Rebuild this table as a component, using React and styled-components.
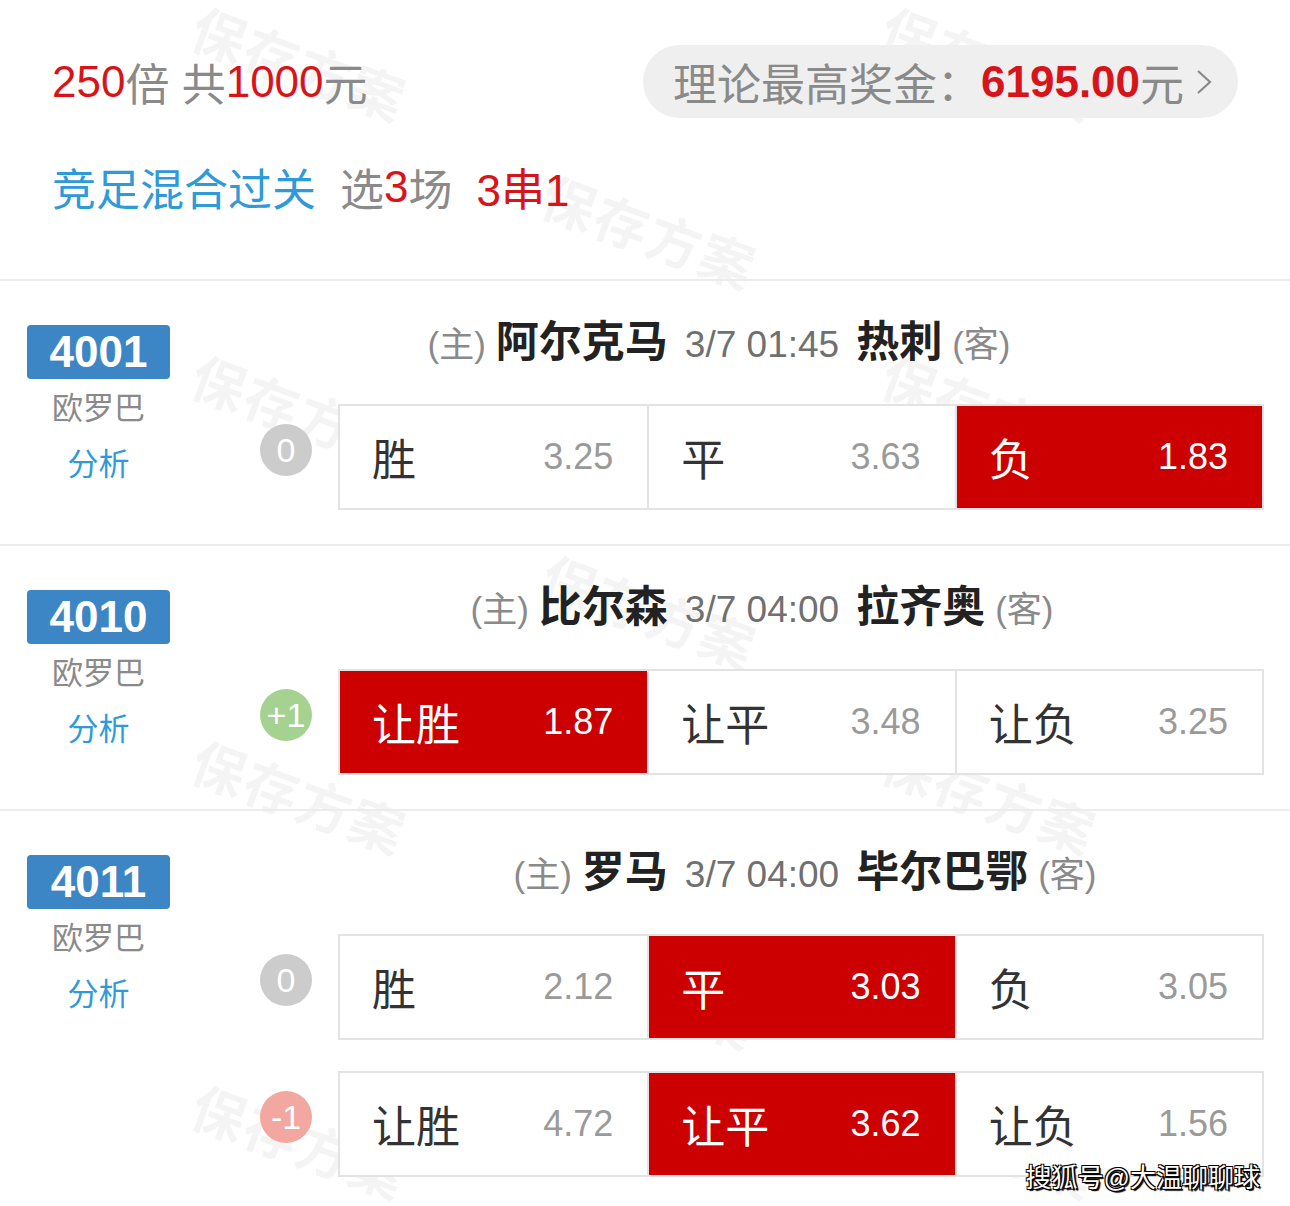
import React from "react";
import styled, { createGlobalStyle } from "styled-components";

const Global = createGlobalStyle`
  html, body { margin: 0; padding: 0; background: #fff; }
  body { font-family: "Liberation Sans", "Noto Sans CJK SC", sans-serif; }
  * { box-sizing: border-box; }
`;

const Page = styled.div`
  position: relative;
  width: 1290px;
  height: 1206px;
  overflow: hidden;
  background: #fff;
`;

const WatermarkLayer = styled.div`
  position: absolute;
  inset: 0;
  pointer-events: none;
  z-index: 0;
`;

const Mark = styled.div`
  position: absolute;
  font-size: 54px;
  font-weight: 700;
  color: rgba(0, 0, 0, 0.045);
  transform: translate(-50%, -50%) rotate(20deg);
  white-space: nowrap;
  letter-spacing: 2px;
`;

const Content = styled.div`
  position: relative;
  z-index: 1;
`;

const Summary = styled.section`
  padding: 45px 52px 67px 52px;
`;

const TopRow = styled.div`
  display: flex;
  align-items: center;
  justify-content: space-between;
  height: 73px;
`;

const Text = styled.span`
  font-size: ${(p) => p.$size || 44}px;
  color: ${(p) =>
    p.$tone === "red" ? "#d8141b" : p.$tone === "blue" ? "#2f9ad9" : "#8a8a8a"};
  font-weight: ${(p) => (p.$bold ? 700 : 400)};
  margin-left: ${(p) => p.$gap || 0}px;
  white-space: pre;
`;

const Line = styled.div`
  display: flex;
  align-items: center;
  height: 50px;
`;

const Pill = styled.div`
  display: flex;
  align-items: center;
  width: 595px;
  height: 73px;
  padding-left: 30px;
  border-radius: 37px;
  background: #efefef;
`;

const Chevron = styled.svg`
  margin-left: 12px;
  width: 16px;
  height: 26px;
`;

const SecondLine = styled(Line)`
  margin-top: 44px;
`;

const Match = styled.section`
  display: flex;
  border-top: 2px solid #ececec;
  padding-bottom: ${(p) => p.$pb || 34}px;
`;

const LeftCol = styled.div`
  width: 143px;
  margin-left: 27px;
  padding-top: 44px;
  display: flex;
  flex-direction: column;
  align-items: center;
`;

const Badge = styled.div`
  width: 143px;
  height: 54px;
  border-radius: 4px;
  background: #3d86c5;
  color: #fff;
  font-size: 44px;
  font-weight: 700;
  display: flex;
  align-items: center;
  justify-content: center;
`;

const League = styled.div`
  margin-top: 10px;
  font-size: 31px;
  line-height: 40px;
  color: #8a8a8a;
`;

const Analysis = styled.div`
  margin-top: 16px;
  font-size: 31px;
  line-height: 40px;
  color: #2f9ad9;
`;

const RightCol = styled.div`
  width: 1004px;
  margin-left: 90px;
  padding-top: 36px;
`;

const Header = styled.div`
  display: grid;
  grid-template-columns: 1fr auto 1fr;
  align-items: baseline;
  height: 50px;
  line-height: 50px;
  column-gap: 17px;
  overflow: visible;
`;

const Side = styled.div`
  display: flex;
  align-items: baseline;
  gap: 10px;
  justify-content: ${(p) => (p.$end ? "flex-end" : "flex-start")};
`;

const Tag = styled.span`
  font-size: 35px;
  color: #8a8a8a;
`;

const Team = styled.span`
  font-size: 43px;
  font-weight: 700;
  color: #222;
`;

const Time = styled.span`
  font-size: 37px;
  color: #707070;
`;

const OddsLine = styled.div`
  display: flex;
  align-items: flex-start;
  margin-top: ${(p) => p.$mt}px;
`;

const Handicap = styled.div`
  width: 52px;
  height: 52px;
  margin-top: 20px;
  margin-right: 26px;
  border-radius: 50%;
  background: ${(p) => p.$bg};
  color: #fff;
  font-size: 34px;
  display: flex;
  align-items: center;
  justify-content: center;
`;

const Grid = styled.div`
  flex: 1;
  display: grid;
  grid-template-columns: repeat(3, 1fr);
  height: 106px;
  border: 2px solid #e3e3e3;
  background: #fff;
`;

const Cell = styled.div`
  display: flex;
  align-items: center;
  justify-content: space-between;
  padding: 0 34px 0 32px;
  border-left: ${(p) => (p.$first ? "none" : "2px solid #e3e3e3")};
  background: ${(p) => (p.$on ? "#cc0000" : "#fff")};
`;

const Label = styled.span`
  font-size: 44px;
  color: ${(p) => (p.$on ? "#fff" : "#333")};
`;

const Odd = styled.span`
  font-size: 36px;
  color: ${(p) => (p.$on ? "#fff" : "#9a9a9a")};
`;

const Credit = styled.div`
  position: absolute;
  right: 30px;
  bottom: 12px;
  z-index: 2;
  font-size: 26px;
  color: #fff;
  text-shadow: 1px 1px 0 #000, -1px -1px 0 #000, 1px -1px 0 #000, -1px 1px 0 #000, 2px 2px 1px #000;
`;

const marks = [
  [300, 62], [990, 62], [650, 230], [300, 410], [990, 410],
  [650, 610], [300, 795], [990, 795], [650, 990], [300, 1140], [990, 1140],
];

const circleColors = { "0": "#cccccc", "+1": "#a5d290", "-1": "#f2a7a1" };

const matches = [
  {
    no: "4001", home: "阿尔克马", time: "3/7 01:45", away: "热刺",
    lines: [{ h: "0", cells: [["胜", "3.25"], ["平", "3.63"], ["负", "1.83"]], on: 2 }],
  },
  {
    no: "4010", home: "比尔森", time: "3/7 04:00", away: "拉齐奥",
    lines: [{ h: "+1", cells: [["让胜", "1.87"], ["让平", "3.48"], ["让负", "3.25"]], on: 0 }],
  },
  {
    no: "4011", home: "罗马", time: "3/7 04:00", away: "毕尔巴鄂",
    lines: [
      { h: "0", cells: [["胜", "2.12"], ["平", "3.03"], ["负", "3.05"]], on: 1 },
      { h: "-1", cells: [["让胜", "4.72"], ["让平", "3.62"], ["让负", "1.56"]], on: 1 },
    ],
  },
];

export default function App() {
  return (
    <Page>
      <Global />
      <WatermarkLayer>
        {marks.map(([x, y], i) => (
          <Mark key={i} style={{ left: x, top: y }}>保存方案</Mark>
        ))}
      </WatermarkLayer>
      <Content>
        <Summary>
          <TopRow>
            <Line>
              <Text $tone="red">250</Text>
              <Text>倍 共</Text>
              <Text $tone="red">1000</Text>
              <Text>元</Text>
            </Line>
            <Pill>
              <Text>理论最高奖金：</Text>
              <Text $tone="red" $bold>6195.00</Text>
              <Text>元</Text>
              <Chevron viewBox="0 0 16 26">
                <polyline points="2,2 14,13 2,24" fill="none" stroke="#8a8a8a" strokeWidth="2.2" />
              </Chevron>
            </Pill>
          </TopRow>
          <SecondLine>
            <Text $tone="blue">竞足混合过关</Text>
            <Text $gap={24}>选</Text>
            <Text $tone="red">3</Text>
            <Text>场</Text>
            <Text $tone="red" $gap={24}>3串1</Text>
          </SecondLine>
        </Summary>
        {matches.map((m, mi) => (
          <Match key={m.no} $pb={mi === 2 ? 27 : 34}>
            <LeftCol>
              <Badge>{m.no}</Badge>
              <League>欧罗巴</League>
              <Analysis>分析</Analysis>
            </LeftCol>
            <RightCol>
              <Header>
                <Side $end>
                  <Tag>(主)</Tag>
                  <Team>{m.home}</Team>
                </Side>
                <Time>{m.time}</Time>
                <Side>
                  <Team>{m.away}</Team>
                  <Tag>(客)</Tag>
                </Side>
              </Header>
              {m.lines.map((ln, li) => (
                <OddsLine key={li} $mt={li === 0 ? 37 : 31}>
                  <Handicap $bg={circleColors[ln.h]}>{ln.h}</Handicap>
                  <Grid>
                    {ln.cells.map(([label, odd], ci) => (
                      <Cell key={ci} $first={ci === 0} $on={ci === ln.on}>
                        <Label $on={ci === ln.on}>{label}</Label>
                        <Odd $on={ci === ln.on}>{odd}</Odd>
                      </Cell>
                    ))}
                  </Grid>
                </OddsLine>
              ))}
            </RightCol>
          </Match>
        ))}
      </Content>
      <Credit>搜狐号@大温聊聊球</Credit>
    </Page>
  );
}
